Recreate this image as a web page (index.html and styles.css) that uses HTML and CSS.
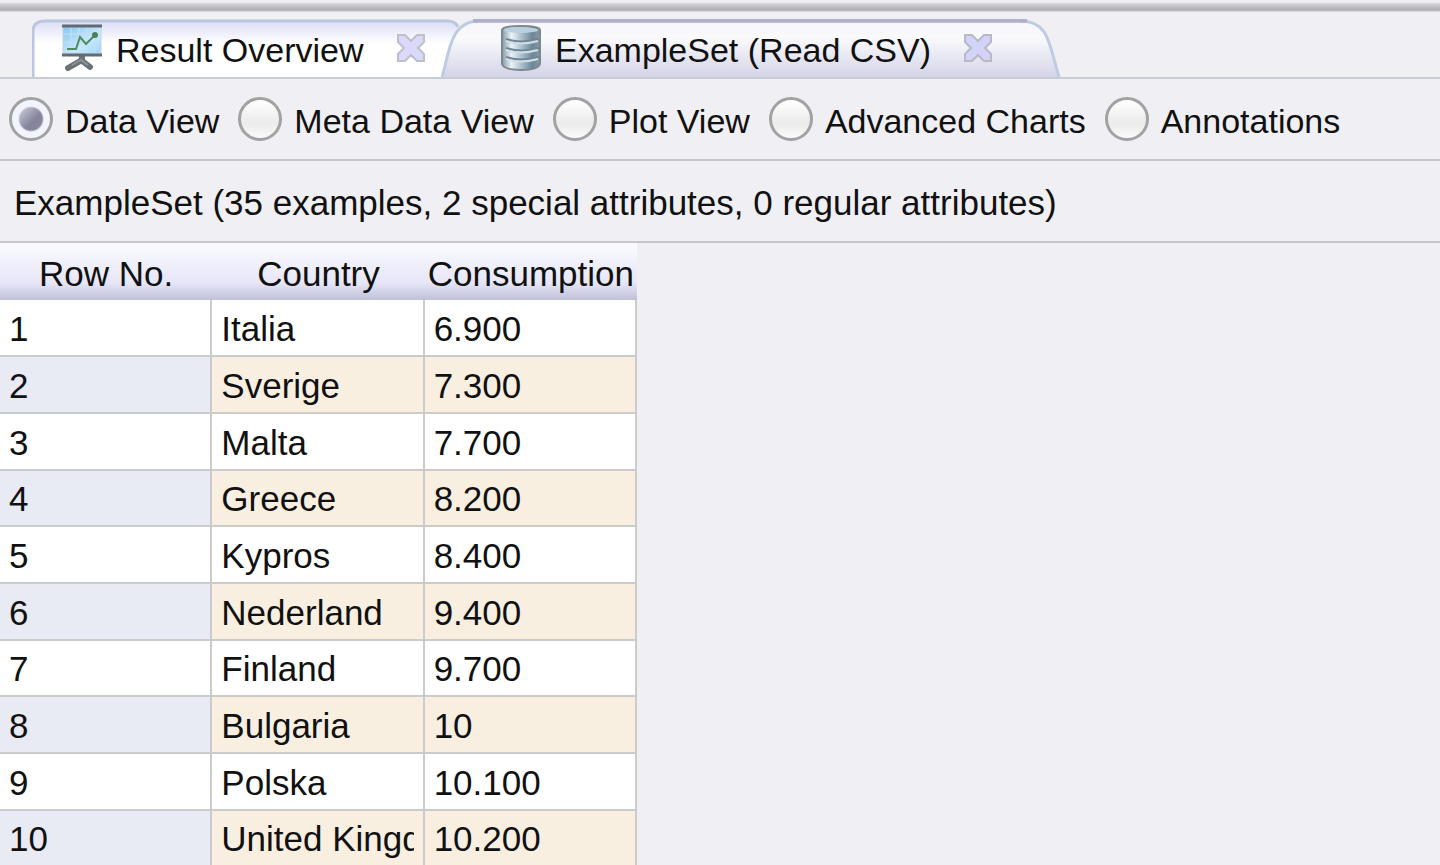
FILE: index.html
```html
<!doctype html>
<html lang="en">

<head>
    <meta charset="UTF-8" />
    <meta name="viewport" content="width=device-width, initial-scale=1.0" />
    <title>ExampleSet (Read CSV)</title>
    <link rel="stylesheet" href="styles.css">
</head>

<body>
    <div class="window-edge"></div>

    <nav class="tabs">
        <div class="tab tab-overview">
            <svg class="tab-shape" viewBox="0 0 430 60" preserveAspectRatio="none" aria-hidden="true">
                <defs>
                    <linearGradient id="overviewFill" x1="0" y1="0" x2="0" y2="1">
                        <stop offset="0" stop-color="#dcdcf8" />
                        <stop offset="0.4" stop-color="#ffffff" />
                    </linearGradient>
                </defs>
                <path d="M1 60V13Q1 2 13 2H416Q422 2 430 10V60Z" fill="url(#overviewFill)" />
                <path d="M1 60V13Q1 2 13 2H416Q423 2 426 8" fill="none" stroke="#bcc6dc" stroke-width="3" />
            </svg>
            <svg class="icon" viewBox="0 0 42 48" aria-hidden="true">
                <defs>
                    <linearGradient id="screenFill" x1="0" y1="0" x2="1" y2="1">
                        <stop offset="0" stop-color="#86c4ee" />
                        <stop offset="0.6" stop-color="#c9e9fc" />
                        <stop offset="1" stop-color="#9fd5f6" />
                    </linearGradient>
                </defs>
                <path d="M21 31V36L7 44M20 36L29 43" fill="none" stroke="#6b7276" stroke-width="6" stroke-linecap="round" />
                <path d="M11 41L20 36L27 41" fill="none" stroke="#8d9497" stroke-width="2" />
                <rect x="2" y="2" width="38" height="28" fill="url(#screenFill)" stroke="#c3d4de" />
                <path d="M3 10H39M3 18H39M10 3V29M18 3V29M26 3V29M34 3V29" stroke="#bfe3f9" stroke-width="1" />
                <path d="M6 25H15L19 13L25 20L35 10" fill="none" stroke="#4f8b60" stroke-width="2" />
                <circle cx="34" cy="11" r="3" fill="#4b8059" />
                <path d="M1 2H41M1 31H41" stroke="#626b74" stroke-width="3" />
            </svg>
            <button class="tab-title" type="button">Result Overview</button>
            <button class="close" type="button" aria-label="Close Result Overview">
                <svg viewBox="0 0 30 30" aria-hidden="true">
                    <path d="M2 2H9L15 8L21 2H28V9L22 15L28 21V28H21L15 22L9 28H2V21L8 15L2 9Z" fill="#d9d9fa" stroke="#bfbfca" stroke-width="2" />
                </svg>
            </button>
        </div>

        <div class="tab tab-example">
            <svg class="tab-shape" viewBox="0 0 620 60" preserveAspectRatio="none" aria-hidden="true">
                <defs>
                    <linearGradient id="exampleFill" x1="0" y1="0" x2="0" y2="1">
                        <stop offset="0" stop-color="#f6f6fb" />
                        <stop offset="0.3" stop-color="#fafafd" />
                        <stop offset="1" stop-color="#d4d4e8" />
                    </linearGradient>
                </defs>
                <path d="M1 60C8 38 8 2 38 2H580C608 2 608 26 618 60Z" fill="url(#exampleFill)" />
                <path d="M1 60C8 38 8 2 38 2M580 2C608 2 608 26 618 60" fill="none" stroke="#bfcbe0" stroke-width="3" />
                <path d="M32 2H586" stroke="#b0b0ca" stroke-width="4" />
            </svg>
            <svg class="icon" viewBox="0 0 42 48" aria-hidden="true">
                <defs>
                    <linearGradient id="drumFill" x1="0" y1="0" x2="1" y2="0">
                        <stop offset="0" stop-color="#8499a5" />
                        <stop offset="0.25" stop-color="#eaf2f7" />
                        <stop offset="0.55" stop-color="#a3b8c6" />
                        <stop offset="0.8" stop-color="#6c8799" />
                        <stop offset="1" stop-color="#8a98a1" />
                    </linearGradient>
                </defs>
                <path d="M2 6Q2 2 21 2Q40 2 40 6V40Q38 46 21 46Q4 46 2 40Z" fill="url(#drumFill)" stroke="#7d878d" stroke-width="2" />
                <ellipse cx="21" cy="6" rx="17" ry="3" fill="#b9d0de" />
                <path d="M6 15Q21 20 39 15M6 24Q21 29 39 24M6 33Q21 38 39 33" fill="none" stroke="#708593" stroke-width="2" />
                <path d="M6 17Q20 22 38 17M6 26Q20 31 38 26M6 35Q20 40 38 35" fill="none" stroke="#cfdde6" stroke-width="2" />
            </svg>
            <button class="tab-title" type="button">ExampleSet (Read CSV)</button>
            <button class="close" type="button" aria-label="Close ExampleSet (Read CSV)">
                <svg viewBox="0 0 30 30" aria-hidden="true">
                    <path d="M2 2H9L15 8L21 2H28V9L22 15L28 21V28H21L15 22L9 28H2V21L8 15L2 9Z" fill="#d3d3fa" stroke="#b9b9c4" stroke-width="2" />
                </svg>
            </button>
        </div>
    </nav>

    <form class="views">
        <label class="view"><input type="radio" name="view" checked><span>Data View</span></label>
        <label class="view"><input type="radio" name="view"><span>Meta Data View</span></label>
        <label class="view"><input type="radio" name="view"><span>Plot View</span></label>
        <label class="view"><input type="radio" name="view"><span>Advanced Charts</span></label>
        <label class="view"><input type="radio" name="view"><span>Annotations</span></label>
    </form>

    <p class="summary">ExampleSet (35 examples, 2 special attributes, 0 regular attributes)</p>

    <table class="data">
        <thead>
            <tr><th>Row No.</th><th>Country</th><th>Consumption</th></tr>
        </thead>
        <tbody>
            <tr><td>1</td><td>Italia</td><td>6.900</td></tr>
            <tr><td>2</td><td>Sverige</td><td>7.300</td></tr>
            <tr><td>3</td><td>Malta</td><td>7.700</td></tr>
            <tr><td>4</td><td>Greece</td><td>8.200</td></tr>
            <tr><td>5</td><td>Kypros</td><td>8.400</td></tr>
            <tr><td>6</td><td>Nederland</td><td>9.400</td></tr>
            <tr><td>7</td><td>Finland</td><td>9.700</td></tr>
            <tr><td>8</td><td>Bulgaria</td><td>10</td></tr>
            <tr><td>9</td><td>Polska</td><td>10.100</td></tr>
            <tr><td>10</td><td><div class="clip">United Kingdom</div></td><td>10.200</td></tr>
        </tbody>
    </table>
</body>

</html>
```
FILE: styles.css
```css
* {
    box-sizing: border-box;
}

body {
    margin: 0;
    height: 100vh;
    overflow: hidden;
    background: #f0eff4;
    color: #111;
    font-family: "Liberation Sans", Arial, sans-serif;
    font-size: 34px;
    line-height: 40px;
}

button {
    padding: 0;
    border: 0;
    background: none;
    color: inherit;
    font: inherit;
}

.window-edge {
    height: 12px;
    background: linear-gradient(#f0eff4 2px, #d2d1d5 4px, #aeadb2 10px, #e2e1e6);
}

/* tabs */

.tabs {
    display: flex;
    align-items: flex-end;
    height: 67px;
    padding-left: 32px;
    border-bottom: 2px solid #c8ccd4;
}

.tab {
    position: relative;
    display: flex;
    align-items: center;
    height: 58px;
}

.tab-overview {
    width: 409px;
    padding-left: 29px;
}

.tab-example {
    width: 620px;
    padding-left: 59px;
}

.tab-shape {
    position: absolute;
    top: 0;
    left: 0;
    width: 100%;
    height: 100%;
}

/* runs under the slanted edge of the next tab */
.tab-overview .tab-shape {
    width: 430px;
}

.icon {
    position: relative;
    width: 42px;
    height: 48px;
    margin-right: 13px;
}

.tab-title {
    position: relative;
    padding-top: 4px;
    white-space: nowrap;
}

.close {
    position: relative;
    width: 30px;
    height: 30px;
    margin-left: 32px;
}

.close svg {
    display: block;
}

/* view switch */

.views {
    display: flex;
    align-items: center;
    gap: 19px;
    height: 82px;
    padding-left: 9px;
    border-bottom: 2px solid #c6c6c9;
}

.view {
    display: flex;
    align-items: center;
    gap: 12px;
    white-space: nowrap;
}

.view span {
    padding-top: 4px;
}

.view input {
    appearance: none;
    width: 44px;
    height: 44px;
    margin: 0;
    border: 3px solid #a2a2a2;
    border-radius: 50%;
    background: linear-gradient(#fff, #ebebeb 60%, #fafafa);
}

.view input:checked {
    background:
        radial-gradient(circle, transparent 11px, #f1f5ff 13px),
        linear-gradient(135deg, #b8b8cc 30%, #85859c 55%);
}

.summary {
    height: 82px;
    margin: 0;
    padding: 22px 14px;
    border-bottom: 2px solid #c6c6c9;
    font-size: 35px;
    white-space: nowrap;
}

/* data table */

.data {
    width: 637px;
    table-layout: fixed;
    border-spacing: 0;
    font-size: 35px;
}

.data th {
    height: 57px;
    padding: 5px 0 0;
    background: linear-gradient(#fbfbff, #e6e6f8 70%, #c0c0d8);
    font-weight: normal;
    white-space: nowrap;
}

.data td {
    height: 57px;
    padding: 2px 9px 0;
    border-right: 2px solid #cbcbcb;
    border-bottom: 2px solid #cbcbcb;
    background: #fff;
    white-space: nowrap;
}

.data tr:nth-child(3n+4) td {
    height: 56px;
}

.data tr:nth-child(even) td {
    background: #f9efe1;
}

.data tr:nth-child(even) td:first-child {
    background: #e8ebf3;
}

.clip {
    overflow: hidden;
}
```
